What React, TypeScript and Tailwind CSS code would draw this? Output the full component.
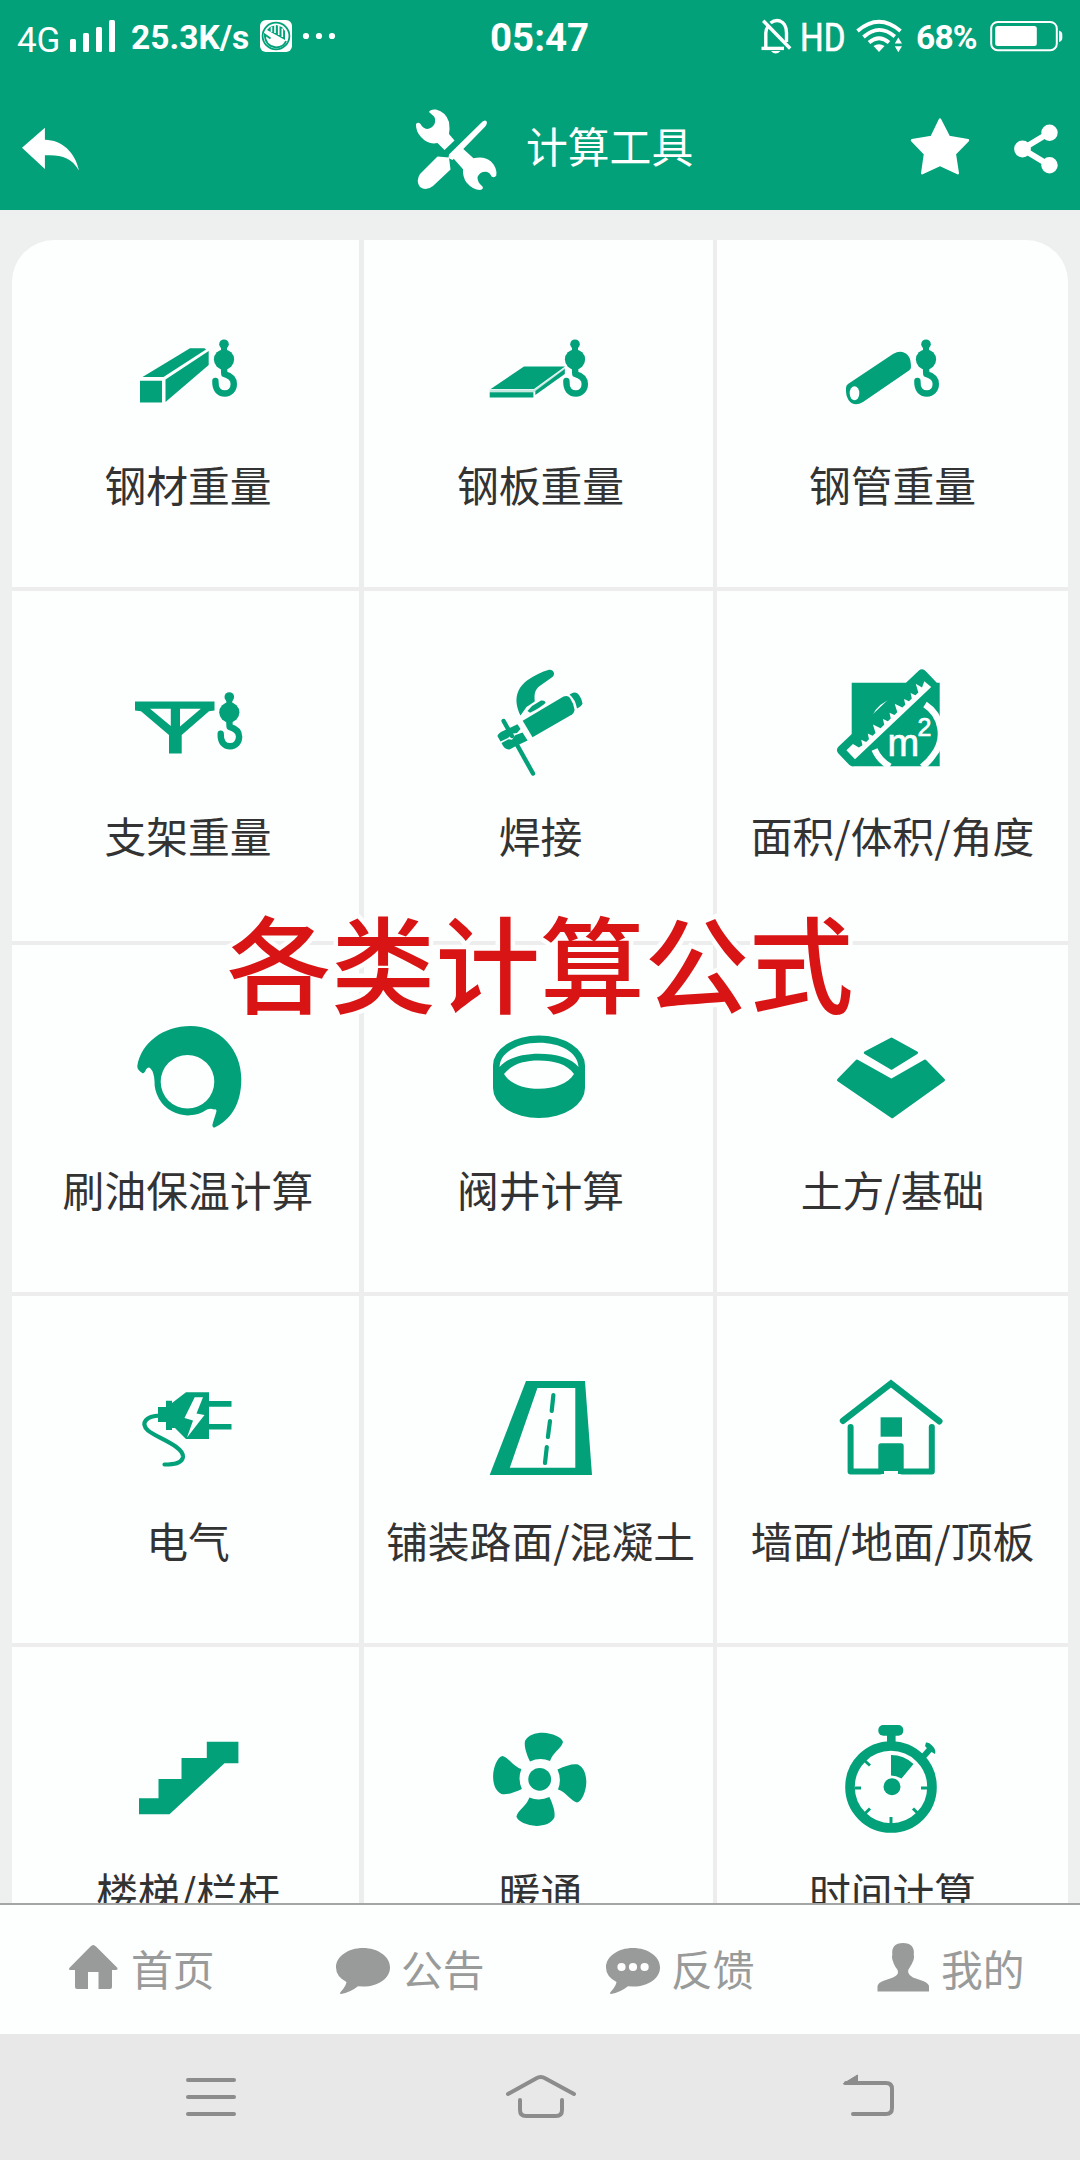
import React from "react";

const GREEN = "#02a17a";

type HookProps = { x: number; y: number };

/* Crane hook; x and y give the middle of the large ball. */
function Hook({ x, y }: HookProps) {
  return (
    <g transform={`translate(${x} ${y})`}>
      <circle cx="0" cy="-15.3" r="4.8" />
      <rect x="-3" y="-14" width="6" height="8" />
      <circle cx="0" cy="0" r="10.1" />
      <path
        d="M-8.6 21.5 C-9 30 -5 34 1 34 C6 34 9.8 30 9.8 24.5 C9.8 18.5 6 16 0.3 14.5 L0 8"
        fill="none"
        stroke={GREEN}
        strokeWidth="6.4"
        strokeLinecap="round"
        strokeLinejoin="round"
      />
    </g>
  );
}

const steelBar = (
  <>
    <path d="M140 380.7H162V402.6H140Z" />
    <path d="M142.5 377 L190 348.3 H204.5 L206 349.5 L163.5 377Z" />
    <path d="M165.5 379.5 L208.7 351 V365 L165.5 402Z" />
    <Hook x={224} y={359.5} />
  </>
);

const steelPlate = (
  <>
    <path d="M490.7 389 L524 366.6 H565 L534 389Z" />
    <path d="M489.7 392.3H533.4V397.4H489.7Z" />
    <path d="M535.3 391 L564.8 369 V374 L535.3 395Z" />
    <path d="M489.7 389.6H534.5L565 367.5V370L534.5 392H489.7Z" opacity="0.22" />
    <Hook x={575} y={359.5} />
  </>
);

const steelPipe = (
  <>
    <path d="M846 388 Q846 385.5 848 384 L893 354 Q902 349 908 355.5 Q911 359 911 367 Q911 369 909 370.5 L863 402 Q854 407.5 848.5 400 Q845.5 395 846 388Z" />
    <ellipse cx="854.5" cy="393.3" rx="4.8" ry="7" fill="#fdfefe" />
    <Hook x={926} y={359.5} />
  </>
);

const bracket = (
  <>
    <path
      fillRule="evenodd"
      d="M135 701.5H214.5V710.5L209 711.3L181.7 735V753.6H169V735L141 711.3L135 710.5Z M150 708.7H170.8V726Z M180 708.7H200.8L180 726.5Z"
    />
    <Hook x={229.3} y={712.3} />
  </>
);

const welding = (
  <>
    <path d="M520.5 715.5 C514 702 515 690 527 680.5 Q538 673 549 669.8 Q552.5 669.3 554 673 Q554.4 676 551 678 L539 686.5 Q534.5 690 534.5 697 L534.7 701.5 L526.5 707Z" />
    <path d="M527.5 711 L532 706 L541 700.5 Q545.5 700 545.5 703 Q540 708 530 712.8Z" />
    <path d="M522.7 720.7 L563.5 696.5 Q568 695 570 698 Q574 704 574.6 710 Q574 713 572 714.5 L532.5 737.3Z" />
    <path d="M569.5 694.5 L573 692.8 Q577 691.5 579 695 Q582 699 582.5 703.5 Q582 706 577 708.6 Q575.5 699.5 569.5 694.5Z" />
    <path d="M497.4 736 Q498.5 733 503 731 L517.5 724.3 L520.5 729 L517 733 L513 733.5 L508 738 L500.5 741.5Z" />
    <path d="M501.5 743 L508.5 739.3 L512 739.8 L515 735.3 L522.5 732.5 L527.6 740.5 L517 745.5 L509.5 749.5 Q504.5 750 501.5 743Z" />
    <path d="M503.6 721 L512 736 M516 743 L533 773.5" stroke={GREEN} strokeWidth="4.4" strokeLinecap="round" />
  </>
);

const area = (
  <>
    <path d="M851.7 682.7H939.7V766.2H851.7Z" />
    <g fill="none" stroke="#fdfefe" strokeWidth="6.4">
      <path d="M925 704.5 A34.5 34.5 0 0 1 933 755.5 Q929 761.5 922 767" />
      <path d="M874.5 749.5 A36 36 0 0 0 890 766.5" />
    </g>
    <path d="M871.7 716.7 Q878 702.5 893.5 698.6 Q881 706 871.7 716.7Z" fill="#fdfefe" />
    <g transform="translate(855 759.3) rotate(-43.45)">
      <rect x="-8" y="-20.5" width="120" height="25" rx="4.5" />
      <path
        fill="#fdfefe"
        d="M0 0 V-12.5 H9 L11 -6 L15 -5 L18 -10 L20 -5 L24 -5 L27 -10 L29 -5 L33 -5 L37 -13 L40 -5 L45 -5 L48 -10 L50 -5 L54 -5 L57 -10 L59 -5 L63 -5 L67 -13 L70 -5 L74 -5 L77 -10 L79 -5 L83 -5 L86 -10 L88 -5 L92 -5 L96 -13 L98 -6 L104 -9 L105 0Z"
      />
    </g>
    <g fill="#fdfefe" stroke="#fdfefe" strokeWidth="0.7" fontFamily="Liberation Sans, Arial, sans-serif">
      <text x="887.5" y="756" fontSize="38">
        m
      </text>
      <text x="917.5" y="736" fontSize="25">
        2
      </text>
    </g>
  </>
);

const insulation = (
  <path
    fillRule="evenodd"
    d="M137.3 1066 C141 1043 163 1026 190.5 1026 C219 1026 241.3 1049 241.3 1079 C241.3 1104 231 1120 214 1127.7 Q211.5 1127 213 1122.500 L216.3 1112 Q217 1108.500 214 1109.500 Q211 1107.800 207 1109.500 A33.5 33.5 0 0 1 154.5 1081 Q154 1072 150.500 1068.500 Q148.500 1066 146 1069.500 Q144.500 1073.500 142.500 1073.200 Q137 1070 137.3 1066Z M160.7 1081.7 a26.8 26.8 0 1 0 53.6 0 a26.8 26.8 0 1 0 -53.6 0Z"
  />
);

const valveWell = (
  <path
    fillRule="evenodd"
    d="M493 1065.5 A46 30 0 0 1 585 1065.5 V1088 A46 30 0 0 1 493 1088Z M499.6 1067 C500 1052 518 1042.7 539 1042.7 C560 1042.7 578 1052 578.5 1067 C572 1058 556 1053.7 539 1053.7 C522 1053.7 507 1058 499.6 1067Z M504 1074 C512 1064 524 1060.5 539 1060.5 C554 1060.5 567 1064 574 1074 C568 1084 554 1088.7 539 1088.7 C524 1088.7 510 1084 504 1074Z"
  />
);

const earthwork = (
  <g stroke={GREEN} strokeWidth="3" strokeLinejoin="round">
    <path d="M891.5 1039 L916.5 1052.8 L891.5 1068.3 L865.3 1052.8Z" />
    <path d="M857 1061 L891.4 1080.2 L925 1061 L943.5 1080 L892.2 1116.8 L838.5 1080Z" />
  </g>
);

const electric = (
  <>
    <path d="M209 1392.3 H186 L172 1403 V1400.7 H166 V1407 H158 V1422 H166 V1430 H172 V1428 H175 L186 1439 H209Z" />
    <path d="M209 1401H231.5V1406.7H209Z M209 1424H231.5V1429.5H209Z" />
    <path d="M194.7 1397.3 H203 L196.5 1413.5 L204.5 1415 L187 1437.5 L193 1420.5 L184.5 1418Z" fill="#fdfefe" />
    <path
      d="M160 1415.5 C146 1416 140 1423 148 1430.5 C155 1437 184 1446 183 1457 C182 1463.5 174 1464.5 164.5 1464.5"
      fill="none"
      stroke={GREEN}
      strokeWidth="4.2"
      strokeLinecap="round"
    />
  </>
);

const road = (
  <>
    <path fillRule="evenodd" d="M526 1381H585L592 1475H489.7Z M537.4 1388L509.8 1467.7H575.3V1388Z" />
    <path
      d="M553.4 1395L551.7 1411 M550 1421L547.9 1437 M546.8 1447L545 1463"
      fill="none"
      stroke={GREEN}
      strokeWidth="4.2"
      strokeLinecap="round"
    />
  </>
);

const house = (
  <>
    <path
      d="M843 1420.8L891 1383.5L939.3 1421.3"
      fill="none"
      stroke={GREEN}
      strokeWidth="6.4"
      strokeLinecap="round"
      strokeLinejoin="miter"
    />
    <path
      d="M850.6 1427V1471.5H880 M931.8 1427V1471.5H902"
      fill="none"
      stroke={GREEN}
      strokeWidth="6"
      strokeLinecap="round"
      strokeLinejoin="round"
    />
    <path d="M880.6 1417.3H902V1436.7H880.6Z" />
    <path d="M878.3 1446Q878.3 1443.3 881 1443.3H901Q903.7 1443.3 903.7 1446V1474L898 1474V1471H884V1474L878.3 1474Z" />
  </>
);

const stairs = (
  <path d="M206.8 1741.7H238.4V1763.3H224.5L169.5 1814.3H139V1798.3H158.5V1779H181.5V1758H206.8Z" />
);

const blade =
  "M530 1761.5 C526 1753 524 1746 525 1741 C528 1735 535 1732.7 543 1732.7 C552 1733 562 1737 563 1742 C561 1749 553 1752 550 1761 Q540 1757 530 1761.5Z";

const fan = (
  <>
    <circle cx="539.7" cy="1779.3" r="11.4" />
    <path d={blade} />
    <path d={blade} transform="rotate(90 539.7 1779.3)" />
    <path d={blade} transform="rotate(180 539.7 1779.3)" />
    <path d={blade} transform="rotate(270 539.7 1779.3)" />
  </>
);

const stopwatch = (
  <>
    <circle cx="891" cy="1787" r="41" fill="none" stroke={GREEN} strokeWidth="9.6" />
    <rect x="878.3" y="1725" width="25" height="10.8" rx="5" />
    <path d="M887 1734H895.6V1744H887Z" />
    <path d="M923 1757L931 1748" stroke={GREEN} strokeWidth="6" />
    <path d="M926 1742.5Q929 1742 932 1745.5Q936.5 1750 935 1754L929 1750.5L925 1746Z" />
    <circle cx="892" cy="1786.8" r="8.5" />
    <path d="M891 1755Q904 1755 913.5 1764L901.5 1778.5Q896 1775.5 891 1775.5Z" />
    <path
      d="M855 1788H861 M921 1788H928 M891 1817V1825 M865 1761L870 1765.5 M865 1813.5L870 1808.5 M918 1813.5L913 1808.5"
      stroke={GREEN}
      strokeWidth="3"
    />
  </>
);

type Tool = { label: string; view: string; icon: React.ReactNode };

const tools: Tool[] = [
  { label: "钢材重量", view: "108 310 160 150", icon: steelBar },
  { label: "钢板重量", view: "461 310 160 150", icon: steelPlate },
  { label: "钢管重量", view: "813 310 160 150", icon: steelPipe },
  { label: "支架重量", view: "108 661 160 150", icon: bracket },
  { label: "焊接", view: "461 661 160 150", icon: welding },
  { label: "面积/体积/角度", view: "813 661 160 150", icon: area },
  { label: "刷油保温计算", view: "108 1015 160 150", icon: insulation },
  { label: "阀井计算", view: "461 1015 160 150", icon: valveWell },
  { label: "土方/基础", view: "813 1015 160 150", icon: earthwork },
  { label: "电气", view: "108 1366 160 150", icon: electric },
  { label: "铺装路面/混凝土", view: "461 1366 160 150", icon: road },
  { label: "墙面/地面/顶板", view: "813 1366 160 150", icon: house },
  { label: "楼梯/栏杆", view: "108 1717 160 150", icon: stairs },
  { label: "暖通", view: "461 1717 160 150", icon: fan },
  { label: "时间计算", view: "813 1717 160 150", icon: stopwatch },
];

const dividers = [
  "shadow-[inset_-5px_-4px_0_#ecedec]",
  "shadow-[inset_-4px_-4px_0_#ecedec]",
  "shadow-[inset_0_-4px_0_#ecedec]",
];

function StatusBar() {
  return (
    <div className="flex h-[72px] items-center font-['Roboto'] leading-none text-white">
      <span className="ml-[17px] w-[53px] pt-[8px] text-[35px] tracking-[-0.2px]">4G</span>
      <svg className="h-[72px] w-[45px]" viewBox="70 0 45 72" fill="#fff">
        <rect x="70" y="39" width="6" height="13" rx="1.5" />
        <rect x="83" y="33" width="6" height="19" rx="1.5" />
        <rect x="96" y="27" width="6" height="25" rx="1.5" />
        <rect x="109" y="20" width="6" height="32" rx="1.5" />
      </svg>
      <span className="ml-[16px] w-[129px] pt-[3px] text-[33.500px] font-bold">25.3K/s</span>
      <svg className="h-[72px] w-[76px]" viewBox="260 0 76 72" fill="#fff">
        <rect x="260" y="20" width="32" height="32" rx="6" />
        <circle cx="276" cy="36" r="13.4" fill="none" stroke={GREEN} strokeWidth="1.8" />
        <path d="M267 30 L285 40 V31 L282 27 L276 25 L270 27Z" fill={GREEN} />
        <path d="M271.5 32V27 M275 33V25 M278.7 35V26 M282.3 37V28.5" stroke="#fff" strokeWidth="1.6" />
        <path d="M270.5 38.5L264.8 34.5Q265 46 276 47.5Q284 47 286 41" fill="none" stroke={GREEN} strokeWidth="1.8" />
        <circle cx="306" cy="36" r="3.1" />
        <circle cx="319" cy="36" r="3.1" />
        <circle cx="332" cy="36" r="3.1" />
      </svg>
      <span className="ml-[154px] w-[102px] pt-[4px] text-[38.500px] font-bold">05:47</span>
      <svg className="ml-[165px] h-[72px] w-[149px]" viewBox="757 0 149 72" fill="#fff">
        <g fill="none" stroke="#fff" strokeWidth="3.4">
          <path d="M765.8 48V33Q766 29 768 26.5 M770.5 23Q775 19.5 780 21Q786.5 23.5 786.5 33V42" />
          <path d="M761.5 48.4H784" />
          <path d="M763.2 20.8L790.2 48.5" />
        </g>
        <path d="M771 51H780.5Q775.5 56 771 51Z" />
        <text
          transform="translate(800 51) scale(0.84 1)"
          fontSize="39.500"
          fontFamily="Roboto, sans-serif"
          stroke="#fff"
          strokeWidth="0.7"
        >
          HD
        </text>
        <g fill="none" stroke="#fff" strokeWidth="3.8">
          <path d="M857.5 31Q879 12.5 900.5 31" />
          <path d="M863.5 37Q879 23 894.8 36.5" />
          <path d="M869 42.5Q879 34 889 42.5" />
        </g>
        <path d="M873.5 46Q879 42.5 884.5 46L879 52Z" />
        <path d="M898.3 37.5L902 43.5H894.8Z M898.3 52.3L902 46.2H894.8Z" />
      </svg>
      <span className="ml-[10px] w-[74px] pt-[3px] text-[33.500px] font-bold tracking-[-0.8px]">68%</span>
      <svg className="h-[72px] w-[73px]" viewBox="990 0 73 72" fill="#fff">
        <rect x="991.2" y="22" width="65.6" height="28.2" rx="6.5" fill="none" stroke="#fff" strokeWidth="2" />
        <rect x="995.2" y="26" width="41.6" height="20" rx="2.5" />
        <path d="M1059 30.5Q1062.3 31.5 1062.3 34.5V38Q1062.3 41 1059 42Z" />
      </svg>
    </div>
  );
}

function TitleBar() {
  return (
    <div className="flex h-[138px] items-center text-white">
      <svg className="ml-[20px] h-[138px] w-[62px]" viewBox="20 72 62 138" fill="#fff">
        <path d="M22 147.7L44.9 127.7V139.7C62 140 75 152 79 170.5C71 157 61 154.5 44.9 155.3V169Z" />
      </svg>
      <svg className="ml-[330px] h-[138px] w-[88px]" viewBox="412 72 88 138" fill="#fff">
        <path d="M429 112Q430 109 436 109.5Q446 112 449 122Q450 129 449 134L454.5 140.5L444.5 150L437.5 143Q428 145 421 137Q415.5 131 416 124Q418 121.5 420.5 124Q423 128.5 427 129Q432 128.5 434.5 124Q436 119 434 116.5Z" />
        <path d="M449 154.5L480.5 123.5Q484 119.5 486.3 121Q488 123 485 126.8L452.5 160L448.5 158Z" />
        <path d="M437.5 156.5L449 157.5L450.5 169.5L433 186Q426 191.5 420 187Q415.5 181 420 174Z" />
        <path d="M461.4 147.3L452 156.7L463 169.3Q462.5 177 466.5 182.5Q473 190 480 190Q484 189 482.5 186.5Q477 182 477.5 177Q480 171.5 486 171.8Q490 172.5 491.5 176.5Q494.5 178.5 496.3 175.5Q497.5 168 491 161.5Q484 155.5 473.5 158.3Z" />
      </svg>
      <h1 className="ml-[26px] w-[168px] pt-[8px] text-[41.800px] leading-[60px] font-normal whitespace-nowrap">计算工具</h1>
      <svg className="ml-[214px] h-[138px] w-[64px]" viewBox="908 72 64 138" fill="#fff">
        <path
          d="M940 119.5L949 137L968 140.3L954.8 153.8L957.8 173.2L940 164.8L922.2 173.2L925 153.8L912 140.3L931.5 137Z"
          stroke="#fff"
          strokeWidth="2.4"
          strokeLinejoin="round"
        />
      </svg>
      <svg className="ml-[38px] h-[138px] w-[52px]" viewBox="1010 72 52 138" fill="#fff">
        <path d="M1049.3 132.8L1022.5 149L1049.3 165.2" fill="none" stroke="#fff" strokeWidth="6" />
        <circle cx="1049.5" cy="132.8" r="8.2" />
        <circle cx="1022.5" cy="149" r="8.4" />
        <circle cx="1049.5" cy="165.3" r="8.2" />
      </svg>
    </div>
  );
}

const bubble =
  "M363 1948C378 1948 390 1956.500 390 1967.500C390 1978.500 378 1986.700 363 1986.500L358 1986.200Q350 1992.500 341 1994Q339 1993.500 341 1991.500Q346 1986 346.500 1982Q336 1976.500 336 1967.500C336 1956.500 348 1948 363 1948Z";

const tabs: Tool[] = [
  {
    label: "首页",
    view: "64 1905 60 129",
    icon: (
      <path d="M93.200 1945Q94.500 1945 96 1946.500L117.500 1968Q118 1970 116 1970H112V1987Q112 1989 110 1989H98.500V1972H88V1989H77Q75 1989 75 1987V1970H70.500Q68.500 1970 69.300 1968L90.500 1946.500Q92 1945 93.200 1945Z" />
    ),
  },
  { label: "公告", view: "334 1905 60 129", icon: <path d={bubble} /> },
  {
    label: "反馈",
    view: "334 1905 60 129",
    icon: (
      <>
        <path d={bubble} />
        <g fill="#fff">
          <circle cx="351.500" cy="1967" r="4.100" />
          <circle cx="363" cy="1967" r="4.100" />
          <circle cx="374.600" cy="1967" r="4.100" />
        </g>
      </>
    ),
  },
  {
    label: "我的",
    view: "874 1905 60 129",
    icon: (
      <path d="M877.500 1991.500V1986Q878.500 1982.500 883 1981L893 1977.500Q898 1975 898 1972.500Q898 1969.500 895.500 1967Q893.500 1963.500 892.500 1960Q891.300 1957 892.300 1955Q891 1943 903 1943Q915 1943 913.800 1955Q914.600 1957 913.500 1960Q912 1964 910 1967Q907.800 1969.500 908.200 1972.500Q909 1975.500 913 1977.500L923 1981Q928 1982.800 929 1986V1991.500Z" />
    ),
  },
];

export default function App() {
  return (
    <div className="relative flex h-[2160px] w-[1080px] flex-col overflow-hidden bg-[#eeefef] font-['Noto_Sans_CJK_SC',sans-serif]">
      <header className="h-[210px] shrink-0 bg-[#02a17a]">
        <StatusBar />
        <TitleBar />
      </header>

      <main className="h-[1693px] shrink-0 overflow-hidden px-[12px] pt-[30px]">
        <div className="grid grid-cols-[352px_353px_351px] grid-rows-[351px_354px_351px_351px_352px] overflow-hidden rounded-t-[42px] bg-[#fdfefe]">
          {tools.map((tool, i) => (
            <div key={tool.label} className={`flex flex-col items-center pt-[70px] ${dividers[i % 3]}`}>
              <svg className="h-[150px] w-[160px] shrink-0" viewBox={tool.view} fill={GREEN}>
                {tool.icon}
              </svg>
              <span className="-mt-[2px] text-[41.800px] leading-[52px] whitespace-nowrap text-[#333]">{tool.label}</span>
            </div>
          ))}
        </div>
      </main>

      <nav className="grid h-[131px] shrink-0 grid-cols-4 border-t-2 border-[#a4a5a5] bg-[#fdfefe]">
        {tabs.map((tab) => (
          <div key={tab.label} className="flex items-center gap-[7px] pl-[64px] text-[#999b9a]">
            <svg className="h-[129px] w-[60px]" viewBox={tab.view} fill="currentColor">
              {tab.icon}
            </svg>
            <span className="pb-[3px] text-[41.800px] leading-[60px]">{tab.label}</span>
          </div>
        ))}
      </nav>

      <footer className="flex h-[126px] shrink-0 items-center justify-between bg-[#e8e8e8] pr-[180px] pl-[180px]">
        <svg className="h-[126px] w-[62px]" viewBox="180 2034 62 126" fill="none" stroke="#8c8c8c" strokeWidth="4" strokeLinecap="round">
          <path d="M188 2080H234 M188 2097H234 M188 2114H234" />
        </svg>
        <svg className="h-[126px] w-[76px]" viewBox="502 2034 76 126" fill="none" stroke="#8c8c8c" strokeWidth="4" strokeLinecap="round">
          <path d="M508 2094L536 2078.500Q540.800 2075.500 545.500 2078.500L574 2094" />
          <path d="M520 2100V2110Q520 2116 526 2116H556Q562 2116 562 2110V2100" />
        </svg>
        <svg className="h-[126px] w-[62px]" viewBox="838 2034 62 126" fill="none" stroke="#8c8c8c" strokeWidth="4" strokeLinecap="round">
          <path d="M853 2114H886Q892 2114 892 2108V2089Q892 2083 886 2083H846" />
          <path d="M843.500 2083.500L857.500 2075V2084.500H845Z" fill="#8c8c8c" stroke="#8c8c8c" strokeWidth="1" />
        </svg>
      </footer>

      <div className="absolute top-[885px] left-0 w-full text-center text-[104.500px] leading-[150px] font-medium whitespace-nowrap text-[#d81414] [-webkit-text-stroke:9px_#fdfefe] [paint-order:stroke_fill]">
        各类计算公式
      </div>
    </div>
  );
}
